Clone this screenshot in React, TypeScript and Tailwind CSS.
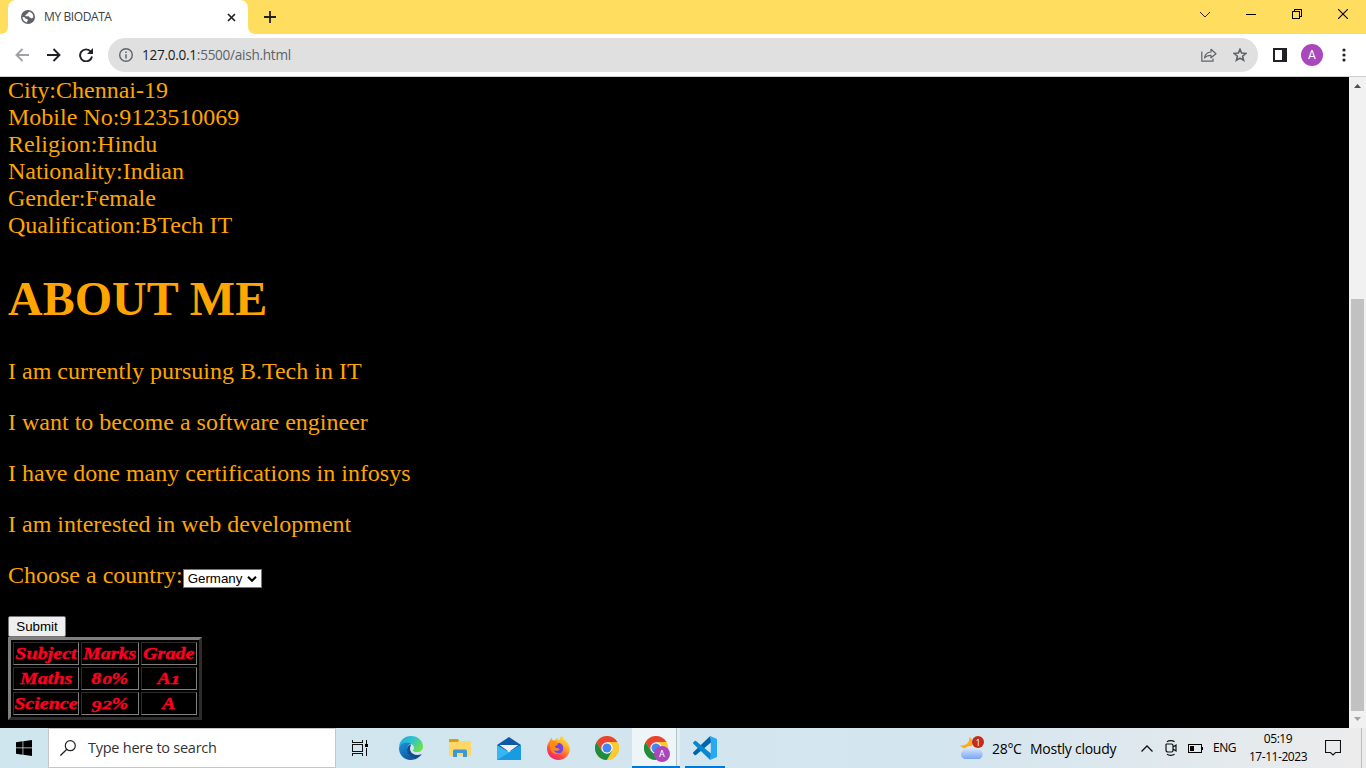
import React from "react";

const details = [
  "City:Chennai-19",
  "Mobile No:9123510069",
  "Religion:Hindu",
  "Nationality:Indian",
  "Gender:Female",
  "Qualification:BTech IT",
];

const about = [
  "I am currently pursuing B.Tech in IT",
  "I want to become a software engineer",
  "I have done many certifications in infosys",
  "I am interested in web development",
];

const marks = [
  ["Subject", "Marks", "Grade"],
  ["Maths", "80%", "A1"],
  ["Science", "92%", "A"],
];

function TabStrip() {
  return (
    <header className="flex h-[34px] shrink-0 bg-[#ffdd5e]">
      <svg className="mt-[26px] h-2 w-2" viewBox="0 0 8 8">
        <path d="M8 0V8H0C5 8 8 5 8 0Z" fill="#fff" />
      </svg>
      <div className="flex h-[34px] w-[240px] items-center rounded-t-lg bg-white pl-[13px]">
        <svg className="h-[14px] w-[14px]" viewBox="0 0 14 14">
          <circle cx="7" cy="7" r="7" fill="#5f6368" />
          <path d="M8.300 1.700C6.800 2 7.500 3.200 6.500 3.500C5.300 3.700 5.700 4.800 4.700 5C4 5.200 4.100 6 4.800 6.200H7.700C8.300 6.400 8.100 7.400 8.900 7.600C10 7.900 9.700 8.600 11 8.300L12.300 7.400C12.600 4.500 11 2.200 8.300 1.700Z" fill="#fff" />
          <path d="M1.600 7.100C1.600 9.900 3.500 12.200 6.100 12.400V11.200C7.200 11 7 9.700 6.400 9.200C5.700 8.600 4.600 9.100 4.200 8.200C3.800 7.300 2.700 7.200 1.600 7.100Z" fill="#fff" />
        </svg>
        <span className="ml-[9px] w-[183px] whitespace-nowrap font-['Open_Sans',sans-serif] text-[12px] leading-4 tracking-[-0.400px] text-[#3c4043]">MY BIODATA</span>
        <svg className="h-[9px] w-[9px]" viewBox="0 0 9 9">
          <path d="M1 1L8 8M8 1L1 8" stroke="#202124" strokeWidth="1.700" />
        </svg>
      </div>
      <svg className="mt-[26px] h-2 w-2" viewBox="0 0 8 8">
        <path d="M0 0V8H8C3 8 0 5 0 0Z" fill="#fff" />
      </svg>
      <svg className="ml-2 mt-[11px] h-3 w-3" viewBox="0 0 12 12">
        <path d="M6 0V12M0 6H12" stroke="#202124" strokeWidth="1.800" />
      </svg>
      <div className="ml-auto mr-[18px] flex h-7 items-center">
        <svg className="mr-[35px] h-[7px] w-[12px]" viewBox="0 0 12 7">
          <path d="M1 1L6 6L11 1" fill="none" stroke="#222" strokeWidth="1" />
        </svg>
        <svg className="mr-[36px] h-[10px] w-[10px]" viewBox="0 0 10 10" shapeRendering="crispEdges">
          <path d="M0 5.500H10" stroke="#000" />
        </svg>
        <svg className="mr-[36px] h-[10px] w-[10px]" viewBox="0 0 10 10" shapeRendering="crispEdges">
          <path d="M.5 2.500H7.500V9.500H.5ZM2.500 2V.5H9.500V7.500H8" fill="none" stroke="#000" />
        </svg>
        <svg className="h-[10px] w-[10px]" viewBox="0 0 10 10">
          <path d="M0 0L10 10M10 0L0 10" stroke="#000" strokeWidth="1.100" />
        </svg>
      </div>
    </header>
  );
}

function Toolbar() {
  return (
    <div className="flex h-[43px] shrink-0 items-center border-b border-[#cfcfcf] bg-white pl-[15px]">
      <svg className="h-[14px] w-[14px]" viewBox="0 0 14 14">
        <path d="M14 7H1.500M7.500 1L1.500 7L7.500 13" fill="none" stroke="#a0a2a5" strokeWidth="1.900" />
      </svg>
      <svg className="ml-[18px] h-[14px] w-[14px]" viewBox="0 0 14 14">
        <path d="M0 7H12.500M6.500 1L12.500 7L6.500 13" fill="none" stroke="#202124" strokeWidth="1.900" />
      </svg>
      <svg className="ml-[18px] h-[14px] w-[14px]" viewBox="0 0 14 14">
        <path d="M11.800 3.600A6 6 0 1 0 13 8.500" fill="none" stroke="#202124" strokeWidth="1.900" />
        <path d="M14 0V6H8Z" fill="#202124" />
      </svg>
      <div className="ml-[15px] flex h-[34px] w-[1150px] items-center rounded-full bg-[#e0e0e0] pl-[11px]">
        <svg className="h-[14px] w-[14px]" viewBox="0 0 14 14">
          <circle cx="7" cy="7" r="6.300" fill="none" stroke="#5f6368" strokeWidth="1.400" />
          <path d="M7 6.200V10.500M7 3.500V5" stroke="#5f6368" strokeWidth="1.500" />
        </svg>
        <span className="ml-[9px] whitespace-nowrap font-['Open_Sans',sans-serif] text-[13.600px] leading-5 tracking-[-0.280px] text-[#5f6368]">
          <span className="text-[#202124]">127.0.0.1</span>:5500/aish.html
        </span>
        <svg className="ml-auto h-[14px] w-[16px]" viewBox="0 0 16 14">
          <path d="M.8 3.500V13.200H12V10.500" fill="none" stroke="#5f6368" strokeWidth="1.200" />
          <path d="M3.500 10C4 6.500 6 4.300 10 4V1.300L15 5.700L10 9.800V7.300C7.200 7.300 5 8 3.500 10Z" fill="none" stroke="#5f6368" strokeWidth="1.200" strokeLinejoin="round" />
        </svg>
        <svg className="ml-4 mr-[11px] h-[14px] w-[14px]" viewBox="0 0 14 14">
          <path d="M7 1.300L8.600 5.100L12.800 5.500L9.600 8.200L10.600 12.300L7 10.100L3.400 12.300L4.400 8.200L1.200 5.500L5.400 5.100Z" fill="none" stroke="#5f6368" strokeWidth="1.600" />
        </svg>
      </div>
      <svg className="ml-[15px] h-[14px] w-[14px]" viewBox="0 0 14 14" shapeRendering="crispEdges">
        <path d="M0 0H14V14H0Z" fill="#202124" />
        <path d="M2 2H9V12H2Z" fill="#fff" />
      </svg>
      <div className="ml-[14px] flex h-[22px] w-[22px] items-center justify-center rounded-full bg-[#ab47bc] font-['Roboto',sans-serif] text-[12px] leading-none text-white">A</div>
      <svg className="ml-[19px] h-[14px] w-1" viewBox="0 0 4 14">
        <circle cx="2" cy="2" r="1.600" fill="#202124" />
        <circle cx="2" cy="7" r="1.600" fill="#202124" />
        <circle cx="2" cy="12" r="1.600" fill="#202124" />
      </svg>
    </div>
  );
}

// Old-style figures: 0, 1 and 2 sit at x-height, 9 hangs below the baseline.
function OldStyle({ text }: { text: string }) {
  return (
    <>
      {text.split(/([0129])/).map((part, i) => {
        if (part === "9") return <span key={i} className="inline-block translate-y-[3px]">9</span>;
        if (/^[012]$/.test(part)) return <span key={i} className="inline-block text-[13.500px] leading-none"><span className="inline-block scale-x-[1.200] px-[1px]">{part}</span></span>;
        return part;
      })}
    </>
  );
}

function Page() {
  return (
    <main className="min-w-0 flex-1 overflow-hidden bg-black px-2 font-['Liberation_Serif',serif] text-2xl leading-[27px] text-[#ffa500]">
      {details.map((line) => (
        <div key={line}>{line}</div>
      ))}
      <h1 className="my-8 text-[48px] font-bold leading-[55px]">ABOUT ME</h1>
      {about.map((line) => (
        <p key={line} className="mb-6">{line}</p>
      ))}
      <div className="flex h-[27px]">
        <label>Choose a country:</label>
        <div className="mt-[7px] flex h-[19px] w-[79px] items-center border border-[#767676] bg-white pl-1 font-['Liberation_Sans',sans-serif] text-[13.333px] leading-4 text-black">
          Germany
          <svg className="ml-[5px] h-[6px] w-[10px]" viewBox="0 0 10 6">
            <path d="M1 .8L5 4.800L9 .8" fill="none" stroke="#000" strokeWidth="2" />
          </svg>
        </div>
      </div>
      <button className="mt-[27px] flex h-[21px] w-[58px] items-center justify-center rounded-[2px] border border-[#767676] bg-[#efefef] font-['Liberation_Sans',sans-serif] text-[13.333px] leading-4 text-black">Submit</button>
      <table className="w-[194px] table-fixed border-separate border-spacing-[2px] border-[3px] border-b-[#2c2c2c] border-l-[#808080] border-r-[#2c2c2c] border-t-[#808080] text-center text-[17px] font-bold italic leading-[21px] text-[#ff0022]">
        <colgroup>
          <col className="w-[66px]" />
          <col className="w-[58px]" />
          <col className="w-[56px]" />
        </colgroup>
        <tbody>
          {marks.map((row) => (
            <tr key={row[0]}>
              {row.map((cell) => (
                <td key={cell} className="h-[23px] overflow-visible whitespace-nowrap border border-b-[#808080] border-l-[#2c2c2c] border-r-[#808080] border-t-[#2c2c2c] p-0">
                  <span className="inline-block h-[21px] translate-y-[-0.500px] scale-x-[1.180] align-top leading-[21px] [-webkit-text-stroke:0.350px_#ff0022]"><OldStyle text={cell} /></span>
                </td>
              ))}
            </tr>
          ))}
        </tbody>
      </table>
    </main>
  );
}

function Scrollbar() {
  return (
    <aside className="flex w-[17px] flex-col items-center bg-[#f1f1f1]">
      <svg className="mt-[7px] h-[4px] w-[7px]" viewBox="0 0 7 4">
        <path d="M0 4L3.500 0L7 4Z" fill="#505050" />
      </svg>
      <div className="mt-[211px] h-[412px] w-[13px] bg-[#c1c1c1]" />
      <svg className="mt-[6px] h-[4px] w-[7px]" viewBox="0 0 7 4">
        <path d="M0 0L3.500 4L7 0Z" fill="#a3a3a3" />
      </svg>
    </aside>
  );
}

function ChromeIcon() {
  return (
    <svg className="h-6 w-6" viewBox="0 0 24 24">
      <circle cx="12" cy="12" r="12" fill="#fcc934" />
      <path d="M12 12L12 6H22.400A12 12 0 0 0 1.600 6L6.800 15Z" fill="#ea4335" />
      <path d="M1.600 6A12 12 0 0 0 12 24L17.200 15L12 12L6.800 15Z" fill="#1e8e3e" />
      <path d="M22.400 6H12V12L17.200 15L12 24A12 12 0 0 0 22.400 6Z" fill="#fcc934" />
      <circle cx="12" cy="12" r="5.700" fill="#fff" />
      <circle cx="12" cy="12" r="4.500" fill="#4285f4" />
    </svg>
  );
}

function EdgeIcon() {
  return (
    <svg className="h-6 w-6" viewBox="0 0 24 24">
      <defs>
        <linearGradient id="edgeTop" x1="0" y1="0" x2="1" y2="0.600">
          <stop offset="0" stopColor="#1fa3e0" />
          <stop offset=".5" stopColor="#2cc3cf" />
          <stop offset="1" stopColor="#6be04a" />
        </linearGradient>
        <linearGradient id="edgeLeft" x1="0" y1="0" x2="0.600" y2="1">
          <stop offset="0" stopColor="#1a94dd" />
          <stop offset="1" stopColor="#0c59a4" />
        </linearGradient>
      </defs>
      <path d="M0 11C.5 4.500 5.500 0 12 0C19 0 24 5 24 10.500C24 14 21.500 16 18.500 16C15.500 16 13.600 15.200 14 14.200C15 13.200 15.200 12 14.700 10.500C13 6 4.500 5 0 11Z" fill="url(#edgeTop)" />
      <path d="M0 12C1.500 6.500 8.500 5.200 12.500 8C10 8 8.500 10 8.300 12.700C8 17 11 21.500 16 23.300C7 26 0 20 0 12Z" fill="url(#edgeLeft)" />
      <path d="M10.500 9C7.500 11 7.300 15 9.500 18.500C11.500 21.500 13.500 22.800 16.300 23.200C19 22.300 21.300 20.300 22.700 18C18 20.300 12.500 18.500 11.300 14.500C10.800 12.500 11 10.500 12.500 8.300Z" fill="#134d8e" />
    </svg>
  );
}

function FolderIcon() {
  return (
    <svg className="h-[18px] w-[22px]" viewBox="0 0 22 18">
      <path d="M0 1Q0 0 1 0H9L11 2H21Q22 2 22 3V16Q22 17 21 17H1Q0 17 0 16Z" fill="#ffd766" />
      <path d="M0 1Q0 0 1 0H9L10 1.500L8.500 3H0Z" fill="#dc9b0c" />
      <path d="M4 18V12Q4 10.500 5.500 10.500H16.500Q18 10.500 18 12V18H14V14H8V18Z" fill="#3c97d3" />
    </svg>
  );
}

function MailIcon() {
  return (
    <svg className="h-[23px] w-6" viewBox="0 0 24 23">
      <path d="M0 8L12 0L24 8V14H0Z" fill="#0f5aa6" />
      <path d="M0 8L12 15L24 8V23H0Z" fill="#38b6f1" />
      <path d="M0 23L24 8V23Z" fill="#199be2" />
      <path d="M2.500 8H21.500L12 14.800Z" fill="#f2f2f2" />
    </svg>
  );
}

function FirefoxIcon() {
  return (
    <svg className="h-[24px] w-[23px]" viewBox="0 0 23 24">
      <defs>
        <linearGradient id="fox" x1="0.800" y1="0" x2="0.200" y2="1">
          <stop offset="0" stopColor="#ffe647" />
          <stop offset=".35" stopColor="#ffab29" />
          <stop offset=".7" stopColor="#ff4b3e" />
          <stop offset="1" stopColor="#eb1784" />
        </linearGradient>
      </defs>
      <path d="M3 4.500C3.300 3.300 4 2 4.800 1.700C4.900 3 5.300 4 6 4.700L8.500 3.800C9 3 10 2 11 2L10.800 4.200L12.500 4C12.400 2 13.500 .5 15.500 0C15.500 3 21 5 22.500 11C24 18 18.500 24 11.500 24C5 24 0 19 0 12.500C0 9.500 1 6.500 3 4.500Z" fill="url(#fox)" />
      <path d="M7.500 9C9 7.800 11 7.500 12.500 7C15.500 8 17 11 16 14C15 17.500 10.500 18.500 7.500 16C5.500 14 5.500 11 7.500 9Z" fill="#7542e5" />
      <path d="M3 4.500C6 4 10 5 11 8C10.500 9.500 8.800 9.500 8 10.200C7.500 11.200 8.800 12 10.500 12.200C12 12.300 13 12.800 12.500 13.500C11 15.500 8 14.800 7 14C8 18 14 19 16 15C12 21 3 18 3 11Z" fill="#ff8a16" />
    </svg>
  );
}

function VsCodeIcon() {
  return (
    <svg className="h-6 w-6" viewBox="0 0 24 24">
      <path d="M17.200 0L18.500 6L3 19Q2.300 19.500 1.600 19L.3 17.700Q-.2 17 .3 16.300Z" fill="#0065a9" />
      <path d="M17.200 24L18.500 18L3 5Q2.300 4.500 1.600 5L.3 6.300Q-.2 7 .3 7.700Z" fill="#0789d1" />
      <path d="M17.200 0L24 3V21L17.200 24L17.800 17V7Z" fill="#29a9f2" />
    </svg>
  );
}

function WeatherIcon() {
  return (
    <div className="relative h-6 w-[25px]">
      <svg className="h-6 w-[25px]" viewBox="0 0 25 24">
        <defs>
          <linearGradient id="cloud" x1="0" y1="0" x2="0" y2="1">
            <stop offset="0" stopColor="#e6f0ff" />
            <stop offset="1" stopColor="#78a6f3" />
          </linearGradient>
        </defs>
        <path d="M9.500 1C15 5 14 12 6 12.500C3.500 12.500 1.500 11.500 0 9.500C6.500 9.500 9.500 7 9.500 1Z" fill="#f8ae24" />
        <path d="M4.500 23A4.700 4.700 0 0 1 4.200 14C5.500 9.500 13 8.500 15.500 13.500A5 5 0 1 1 19.500 23Z" fill="url(#cloud)" />
      </svg>
      <span className="absolute left-[12px] top-0 flex h-3 w-3 items-center justify-center rounded-full bg-[#c42b1c] font-['Open_Sans',sans-serif] text-[9px] leading-none text-white">1</span>
    </div>
  );
}

function Taskbar() {
  return (
    <footer className="flex h-10 shrink-0 items-center bg-linear-to-r from-[#cfe6ee] via-[#d4e5ef] via-70% to-[#ececec] font-['Open_Sans',sans-serif] text-black">
      <div className="flex h-10 w-12 items-center justify-center">
        <svg className="h-4 w-4" viewBox="0 0 16 16">
          <path d="M0 2.200L6.600 1.300V7.600H0ZM7.300 1.200L16 0V7.600H7.300ZM0 8.300H6.600V14.700L0 13.800ZM7.300 8.300H16V16L7.300 14.800Z" />
        </svg>
      </div>
      <div className="flex h-10 w-72 items-center border border-[#c6c6c6] bg-white pl-[11px]">
        <svg className="h-4 w-4" viewBox="0 0 16 16">
          <circle cx="10.300" cy="5.700" r="5" fill="none" stroke="#222" strokeWidth="1.200" />
          <path d="M6.800 9.200L.4 15.600" stroke="#222" strokeWidth="1.300" />
        </svg>
        <span className="ml-3 whitespace-nowrap text-[14.500px] tracking-[-0.250px] text-[#333]">Type here to search</span>
      </div>
      <svg className="ml-4 h-4 w-4" viewBox="0 0 16 16" shapeRendering="crispEdges">
        <path d="M.5 4.500H10.500V11.500H.5ZM.5 0V2.500H10.500V0M.5 16V13.500H10.500V16M14.500 0V4M14.500 8V16" fill="none" stroke="#111" />
        <path d="M13 4H16V7H13Z" />
      </svg>
      <div className="ml-[31px] flex w-6 justify-center"><EdgeIcon /></div>
      <div className="ml-[25px] flex w-6 justify-center"><FolderIcon /></div>
      <div className="ml-[25px] flex w-6 justify-center"><MailIcon /></div>
      <div className="ml-[25px] flex w-6 justify-center"><FirefoxIcon /></div>
      <div className="ml-[25px] flex w-6 justify-center"><ChromeIcon /></div>
      <div className="ml-[13px] flex h-10 w-12 border-b-2 border-[#0078d7]">
        <div className="relative flex w-[44px] items-center bg-[#eef5f9] pl-3 pt-[2px]">
          <ChromeIcon />
          <span className="absolute left-[22px] top-[18px] flex h-4 w-4 items-center justify-center rounded-full bg-[#ab47bc] font-['Roboto',sans-serif] text-[9px] leading-none text-white">A</span>
        </div>
        <div className="w-px bg-[#b4c4cb]" />
        <div className="w-[3px] bg-[#e2eef3]" />
      </div>
      <div className="ml-[5px] flex h-10 w-10 items-center justify-center border-b-2 border-[#0078d7] pt-[2px]"><VsCodeIcon /></div>
      <div className="ml-[235px]"><WeatherIcon /></div>
      <span className="ml-[7px] w-[38px] whitespace-nowrap text-[14px] tracking-[-0.300px]">28°C</span>
      <span className="w-[111px] whitespace-nowrap text-[14px] tracking-[-0.270px]">Mostly cloudy</span>
      <svg className="h-[7px] w-3" viewBox="0 0 12 7">
        <path d="M.5 6.500L6 1L11.500 6.500" fill="none" stroke="#111" strokeWidth="1.300" />
      </svg>
      <svg className="ml-3 h-4 w-3" viewBox="0 0 12 16">
        <path d="M2 1.800C3.500 .2 8 .2 9.500 1.800M2 14.200C3.500 15.800 8 15.800 9.500 14.200" fill="none" stroke="#111" strokeWidth="1.200" />
        <path d="M1.500 4H6.500Q8 4 8 5.500V10.500Q8 12 6.500 12H3Q1 12 1 10V4.500ZM8 7L11 5V11L8 9" fill="none" stroke="#111" strokeWidth="1.200" />
      </svg>
      <svg className="ml-[11px] mt-px h-[9px] w-[15px]" viewBox="0 0 15 9" shapeRendering="crispEdges">
        <path d="M.5 .5H13.500V8.500H.5Z" fill="none" stroke="#000" />
        <path d="M2 2H6V7H2ZM14 3H15V6H14Z" />
      </svg>
      <span className="ml-[10px] w-[35px] whitespace-nowrap text-[12px] tracking-[-0.500px]">ENG</span>
      <div className="flex w-[60px] flex-col items-center whitespace-nowrap text-[12px] leading-[18px] tracking-[-0.450px]">
        <span>05:19</span>
        <span>17-11-2023</span>
      </div>
      <svg className="ml-[17px] h-4 w-4" viewBox="0 0 16 16">
        <path d="M.5 .5H15.500V12.500H10.500L8 15L5.500 12.500H.5Z" fill="none" stroke="#111" strokeWidth="1.100" />
      </svg>
      <div className="ml-[20px] h-10 w-px bg-[#bcbcbc]" />
    </footer>
  );
}

export default function App() {
  return (
    <div className="flex h-[768px] w-[1366px] flex-col overflow-hidden bg-black">
      <TabStrip />
      <Toolbar />
      <div className="flex min-h-0 flex-1">
        <Page />
        <Scrollbar />
      </div>
      <Taskbar />
    </div>
  );
}
